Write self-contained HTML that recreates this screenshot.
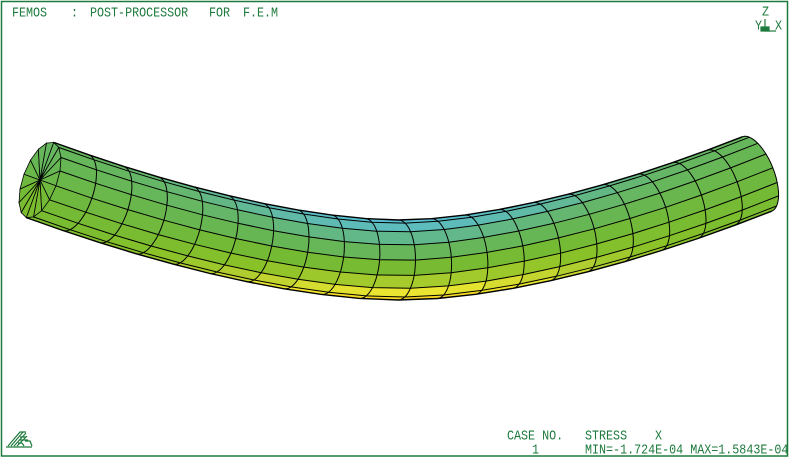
<!DOCTYPE html>
<html><head><meta charset="utf-8"><style>
html,body{margin:0;padding:0;background:#fff;}
#c{position:relative;width:790px;height:461px;overflow:hidden;background:#fff;}
.t{position:absolute;font-family:"Liberation Mono",monospace;font-size:11.7px;color:#1d7a3c;line-height:12px;white-space:pre;transform:scaleY(1.15);transform-origin:left top;}
svg{position:absolute;left:0;top:0;}
</style></head><body><div id="c">
<svg id="s" width="790" height="461" viewBox="0 0 790 461">
<rect x="1.5" y="1.5" width="786" height="454.5" fill="none" stroke="#1d7a3c" stroke-width="1.5"/>
<g id="tube"></g>
<g stroke="#1d7a3c" fill="none" stroke-width="1.2">
<line x1="765" y1="19" x2="765" y2="31"/><line x1="765" y1="31" x2="776" y2="31"/>
<rect x="761" y="27" width="8" height="4" fill="#1d7a3c"/>
</g>
<g stroke="#1d7a3c" stroke-width="1.2" fill="none">
<path d="M8 446 L20 432 L26 432 M11 446 L23 432 M14 446 L26 433 M17 446 L27 436 M6 447 L32 447 M18 443 L22 443 M19 440 L28 440 M20 437 L26 437 M22 443 L24 446 M25 441 L30 441 L32 446"/>
</g>
</svg>
<div class="t" style="left:12px;top:6px">FEMOS</div>
<div class="t" style="left:71px;top:6px">:</div>
<div class="t" style="left:90px;top:6px">POST-PROCESSOR</div>
<div class="t" style="left:209px;top:6px">FOR</div>
<div class="t" style="left:243px;top:6px">F.E.M</div>
<div class="t" style="left:762px;top:5px">Z</div>
<div class="t" style="left:755px;top:19px">Y</div>
<div class="t" style="left:775px;top:19px">X</div>
<div class="t" style="left:507px;top:429px">CASE NO.</div>
<div class="t" style="left:585px;top:429px">STRESS</div>
<div class="t" style="left:655px;top:429px">X</div>
<div class="t" style="left:532px;top:443px">1</div>
<div class="t" style="left:585px;top:443px">MIN=-1.724E-04 MAX=1.5843E-04</div>
</div>
<script>
(function(){
var g=document.getElementById('tube');
var k0=Math.pow(0.02,0.8),k1=Math.pow(1.02,0.8)-k0;
function Y(x){var u=(x-400)/(x<400?360:357);var d=x<400?80:86;return 260-d*(Math.pow(u*u+0.02,0.8)-k0)/k1;}
var stops=[[-1,[88,192,212]],[-0.7,[96,186,170]],[-0.4,[100,182,110]],[-0.1,[104,182,80]],[0.15,[116,186,52]],[0.4,[136,194,40]],[0.65,[184,208,48]],[0.85,[240,232,48]],[1,[248,212,32]]];
function col(v){v=Math.max(-1,Math.min(1,v));for(var i=0;i<stops.length-1;i++){var a=stops[i],b=stops[i+1];if(v<=b[0]){var f=(v-a[0])/(b[0]-a[0]);var c=a[1].map(function(x,k){return Math.round(x+(b[1][k]-x)*f)});return 'rgb('+c+')';}}return 'rgb('+stops[stops.length-1][1]+')';}
var r=40,e=17,NS=20,NB=8,x0=40,x1=757;
var rings=[];
for(var i=0;i<=NS;i++){var x=x0+(x1-x0)*i/NS,y=Y(x),h=0.5,dy=(Y(x+h)-Y(x-h))/(2*h);var L=Math.sqrt(1+dy*dy);var d=[1/L,dy/L],n=[d[1],-d[0]];rings.push({c:[x,y],d:d,n:n,u:(x-400)/360});}
function P(R,th){return [R.c[0]+R.n[0]*r*Math.cos(th)+R.d[0]*e*Math.sin(th),R.c[1]+R.n[1]*r*Math.cos(th)+R.d[1]*e*Math.sin(th)];}
var s='';
for(var i=0;i<NS;i++){var A=rings[i],B=rings[i+1];var um=(A.u+B.u)/2;var q=Math.max(0,1-um*um);var w=0.25+0.75*q*q;
for(var j=0;j<NB;j++){var t0=Math.PI*j/NB,t1=Math.PI*(j+1)/NB,tm=(t0+t1)/2;var v=-Math.cos(tm)*w;
var p=[P(A,t0),P(B,t0),P(B,t1),P(A,t1)];s+='<polygon points="'+p.map(function(q){return q[0].toFixed(1)+','+q[1].toFixed(1)}).join(' ')+'" fill="'+col(v)+'" stroke="'+col(v)+'" stroke-width="0.6"/>';}}
for(var j=0;j<=NB;j++){var th=Math.PI*j/NB;var pts=rings.map(function(R){var q=P(R,th);return q[0].toFixed(1)+','+q[1].toFixed(1)}).join(' ');s+='<polyline points="'+pts+'" fill="none" stroke="#000" stroke-width="'+(j==0||j==NB?1.4:1)+'"/>';}
for(var i=1;i<=NS;i++){var pts=[];for(var k=0;k<=24;k++){var q=P(rings[i],Math.PI*k/24);pts.push(q[0].toFixed(1)+','+q[1].toFixed(1));}s+='<polyline points="'+pts.join(' ')+'" fill="none" stroke="#000" stroke-width="1"/>';}
var R0=rings[0],NC=16;
for(var k=0;k<NC;k++){var a0=2*Math.PI*k/NC,a1=2*Math.PI*(k+1)/NC,am=(a0+a1)/2;var q0=P(R0,a0),q1=P(R0,a1);var v=-Math.cos(am)*0.25;
s+='<polygon points="'+R0.c[0]+','+R0.c[1]+' '+q0[0].toFixed(1)+','+q0[1].toFixed(1)+' '+q1[0].toFixed(1)+','+q1[1].toFixed(1)+'" fill="'+col(v)+'" stroke="#000" stroke-width="0.8"/>';}
g.innerHTML=s;
})();
</script>
</body></html>
